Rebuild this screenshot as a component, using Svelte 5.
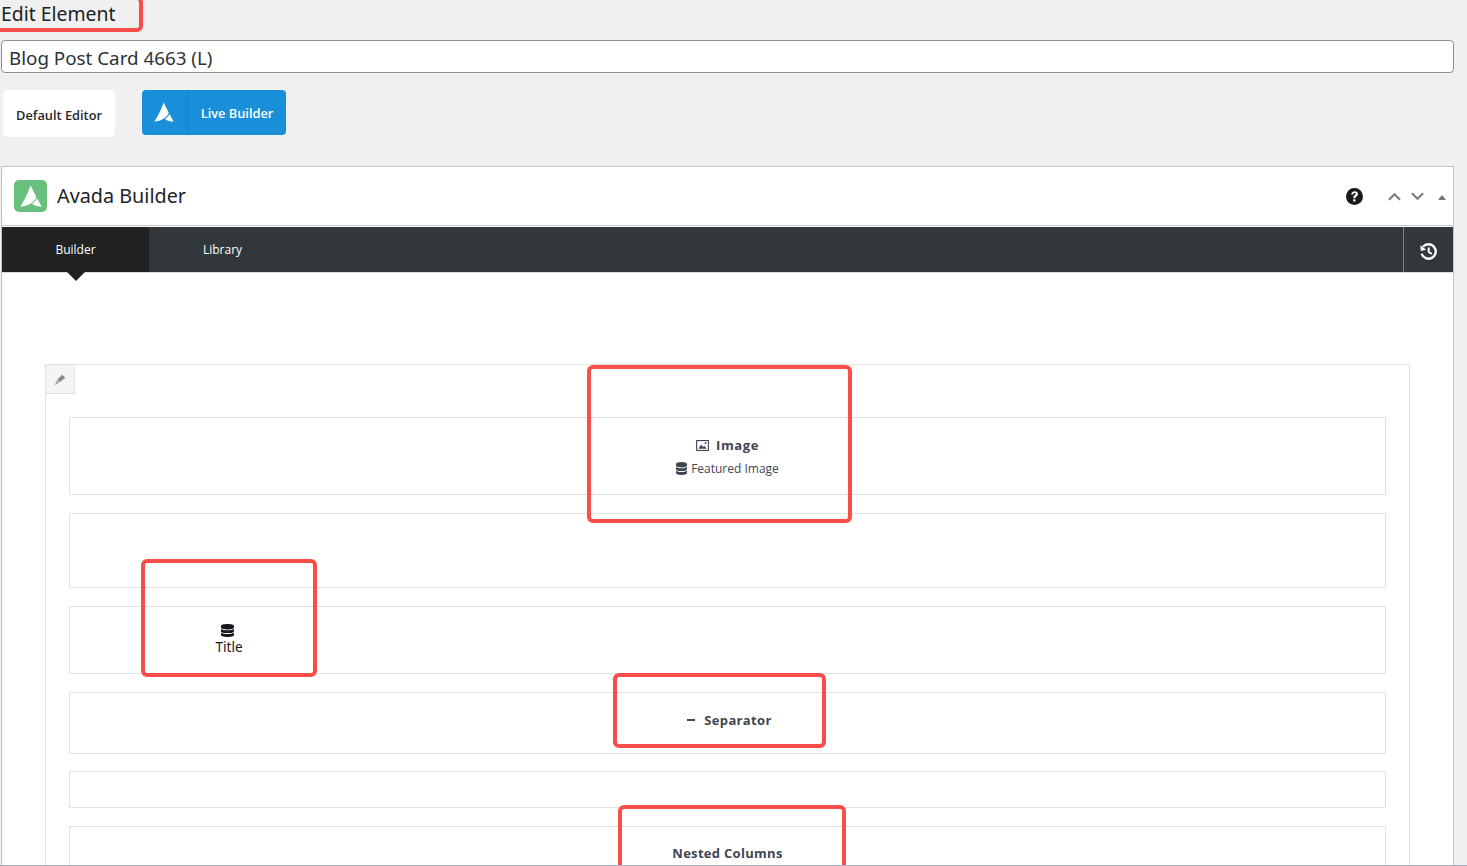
<script>
  const db = "M6 0C2.700 0 0 .8 0 2.100v1.600C0 5 2.700 5.800 6 5.800s6-.8 6-2.100V2.100C12 .8 9.300 0 6 0zM0 5.300v2.400C0 9 2.700 9.800 6 9.800s6-.8 6-2.100V5.300C10.700 6.300 8.400 6.800 6 6.800S1.300 6.300 0 5.300zm0 4v2.600C0 13.200 2.700 14 6 14s6-.8 6-2.100V9.300c-1.300 1-3.600 1.500-6 1.500S1.300 10.300 0 9.300z";
</script>

{#snippet avada(cls)}
  <svg class={cls} viewBox="0 0 24 24" aria-hidden="true">
    <path fill="#fff" d="M11.500 .5 L17.800 13 C15.500 19 9 23 .5 23.500 C4.500 17 8.500 9.500 11.500 .5z"/>
    <path fill="#fff" d="M18.600 14.500 L23.500 23.500 C19.500 23.500 15.800 22.500 13.200 20.400 C15.500 19 17.500 17 18.600 14.500z"/>
  </svg>
{/snippet}

<div class="page">
  <h1 class="title">Edit Element</h1>
  <input class="name" value="Blog Post Card 4663 (L)" aria-label="Name" />

  <div class="switch">
    <button class="default">Default Editor</button>
    <button class="live">
      <span class="live-icon">{@render avada("live-logo")}</span>
      <span class="live-text">Live Builder</span>
    </button>
  </div>

  <section class="postbox">
    <header class="box-head">
      <span class="box-logo">{@render avada("box-logo-svg")}</span>
      <h2>Avada Builder</h2>
      <div class="box-actions">
        <svg class="help" viewBox="0 0 16 16" aria-hidden="true">
          <circle cx="8" cy="8" r="8" fill="#191919"/>
          <path d="M4.900 6C5 4.200 6.300 3 8.200 3c1.800 0 3.100 1.100 3.100 2.700 0 1.100-.6 1.700-1.500 2.300-.7.400-.9.700-.9 1.300v.3H6.900V9c0-1.100.4-1.700 1.200-2.200.7-.4 1-.7 1-1.100 0-.5-.4-.9-1-.9-.7 0-1.100.4-1.200 1.200z" fill="#fff"/>
          <rect x="6.800" y="10.600" width="2.100" height="2.100" rx=".3" fill="#fff"/>
        </svg>
        <svg class="chev up" viewBox="0 0 14 9" aria-hidden="true"><path d="M1 8 7 2l6 6" /></svg>
        <svg class="chev down" viewBox="0 0 14 9" aria-hidden="true"><path d="M1 1l6 6 6-6" /></svg>
        <svg class="tri" viewBox="0 0 8 5" aria-hidden="true"><path d="M4 0l4 5H0z" fill="#72777c"/></svg>
      </div>
    </header>

    <nav class="tabs">
      <div class="tab active">Builder</div>
      <div class="tab">Library</div>
      <div class="history">
        <svg viewBox="0 0 16 16" aria-hidden="true">
          <path d="M2.800 3.600A6.800 6.800 0 1 1 1.500 10" fill="none" stroke="#fff" stroke-width="2.200"/>
          <path d="M.3 2.200 .8 7.500l5-1.200z" fill="#fff"/>
          <path d="M8.200 4.300v4.200l2.900 1.800" fill="none" stroke="#fff" stroke-width="1.900"/>
        </svg>
      </div>
    </nav>

    <div class="canvas">
      <div class="container">
        <div class="pencil">
          <svg viewBox="0 0 12 12" aria-hidden="true">
            <path d="M8 .7 11.300 3.700 5.700 8.300 3.200 5.800z" fill="#8b8b8b"/>
            <path d="M2.800 6.300 5.100 8.800 .7 11.300z" fill="#a9a29a"/>
          </svg>
        </div>

        <div class="row r1">
          <div class="el-head">
            <svg class="img-ico" viewBox="0 0 14 12" aria-hidden="true">
              <rect x=".6" y=".6" width="12.800" height="10.800" fill="#fff" stroke="#3f4652" stroke-width="1.200"/>
              <path d="M2.500 9.500 5.500 5l2 2.500L9 6.300l2.500 3.200z" fill="#3f4652"/>
              <circle cx="10.300" cy="3.300" r="1" fill="#3f4652"/>
            </svg>
            <span>Image</span>
          </div>
          <div class="el-sub">
            <svg class="db" viewBox="0 0 12 14" preserveAspectRatio="none" aria-hidden="true"><path d={db} fill="#3f4652"/></svg>
            <span>Featured Image</span>
          </div>
        </div>

        <div class="row r2"></div>

        <div class="row r3">
          <div class="title-el">
            <svg class="db dark" viewBox="0 0 12 14" preserveAspectRatio="none" aria-hidden="true"><path d={db} fill="#15181c"/></svg>
            <span>Title</span>
          </div>
        </div>

        <div class="row r4">
          <div class="el-head sep"><i class="dash"></i><span>Separator</span></div>
        </div>

        <div class="row r5"></div>

        <div class="row r6">
          <div class="el-head nested"><span>Nested Columns</span></div>
        </div>
      </div>
    </div>
  </section>

  <i class="mark m-edit"></i>
  <i class="mark m-image"></i>
  <i class="mark m-title"></i>
  <i class="mark m-sep"></i>
  <i class="mark m-nested"></i>
  <i class="edge"></i>
</div>

<style>
  :global(body) { margin: 0; background: #f0f0f1; }
  .page {
    position: relative;
    height: 866px;
    overflow: hidden;
    padding: 0 13px 0 1px;
    box-sizing: border-box;
    background: #f0f0f1;
    font-family: "Open Sans", "Noto Sans", sans-serif;
    color: #1d2327;
  }
  .title {
    margin: 0;
    height: 40px;
    font: 400 19.400px/27px "Noto Sans", "Open Sans", sans-serif;
    color: #1d2327;
  }
  .name {
    display: block;
    width: 100%;
    height: 33px;
    box-sizing: border-box;
    border: 1px solid #8c8f94;
    border-radius: 4px;
    padding: 2px 7px 0;
    background: #fff;
    font: 400 18.800px/29px "Noto Sans", "Open Sans", sans-serif;
    color: #2c3338;
    outline: none;
  }
  .switch {
    display: flex;
    gap: 27px;
    margin: 17px 0 29px 2px;
    height: 47px;
    align-items: flex-start;
  }
  button {
    border: 0;
    padding: 0;
    font-family: "Open Sans", "Noto Sans", sans-serif;
    font-weight: 600;
    cursor: pointer;
  }
  .default {
    width: 112px;
    height: 47px;
    padding-top: 2px;
    background: #fff;
    border-radius: 5px;
    font-size: 12.800px;
    color: #23282d;
  }
  .live {
    display: flex;
    width: 144px;
    height: 45px;
    background: #198fd9;
    border-radius: 4px;
    color: #fff;
    font-size: 12.800px;
  }
  .live-icon {
    display: flex;
    align-items: center;
    justify-content: center;
    width: 45px;
    height: 100%;
    box-sizing: content-box;
    border-right: 1px solid #1a7fbf;
  }
  .live-text {
    flex: 1;
    line-height: 47px;
    text-align: center;
  }
  .live :global(.live-logo) { width: 20px; height: 20px; margin-top: -1px; margin-left: -1px; }

  .postbox {
    border: 1px solid #c3c4c7;
    background: #fff;
    box-sizing: border-box;
    height: 760px;
  }
  .box-head {
    display: flex;
    align-items: center;
    height: 58px;
    padding: 0 7px 0 12px;
    border-bottom: 1px solid #c3c4c7;
    box-sizing: content-box;
  }
  .box-logo {
    display: flex;
    align-items: center;
    justify-content: center;
    width: 33px;
    height: 32px;
    border-radius: 5px;
    background: #69c07d;
  }
  .box-logo :global(.box-logo-svg) { width: 22px; height: 22px; }
  h2 {
    margin: 0 0 0 10px;
    font: 400 19.800px/26px "Noto Sans", "Open Sans", sans-serif;
    color: #1d2327;
  }
  .box-actions {
    margin-left: auto;
    display: flex;
    align-items: center;
  }
  .help { width: 17px; height: 17px; margin-right: 25px; }
  .chev { width: 13px; height: 9px; fill: none; stroke: #787c82; stroke-width: 2.200; }
  .down { margin-left: 10px; }
  .tri { width: 8px; height: 5px; margin-left: 14px; margin-top: 2px; }

  .tabs {
    display: flex;
    height: 45px;
    background: #32373c;
    border-bottom: 1px solid #dcdcde;
    box-sizing: content-box;
    font-size: 12px;
    color: #fff;
    margin-top: 1px;
  }
  .tab {
    position: relative;
    width: 147px;
    line-height: 45px;
    text-align: center;
  }
  .tab.active { background: #222; }
  .tab.active::after {
    content: "";
    position: absolute;
    left: 65px;
    top: 45px;
    border: 9px solid transparent;
    border-top-color: #222;
    border-bottom: 0;
  }
  .history {
    margin-left: auto;
    width: 50px;
    padding: 3px 0 0 0;
    box-sizing: border-box;
    border-left: 1px solid #7d8084;
    display: flex;
    align-items: center;
    justify-content: center;
  }
  .history svg { width: 17px; height: 17px; }

  .canvas { padding: 91px 43px 0; }
  .container {
    position: relative;
    border: 1px solid #e2e2e2;
    padding: 52px 23px 0;
    min-height: 600px;
  }
  .pencil {
    position: absolute;
    left: 0;
    top: 0;
    width: 29px;
    height: 29px;
    padding-top: 2px;
    box-sizing: border-box;
    background: #f5f5f5;
    border-right: 1px solid #e2e2e2;
    border-bottom: 1px solid #e2e2e2;
    display: flex;
    align-items: center;
    justify-content: center;
  }
  .pencil svg { width: 12px; height: 12px; }
  .row {
    border: 1px solid #e2e2e2;
    box-sizing: border-box;
    text-align: center;
    margin-bottom: 18px;
  }
  .r1 { height: 78px; padding-top: 18px; }
  .r2 { height: 75px; }
  .r3 { height: 68px; padding-top: 17px; }
  .r4 { height: 62px; padding-top: 18px; margin-bottom: 17px; }
  .r5 { height: 37px; }
  .r6 { height: 60px; padding-top: 17px; }
  .el-head {
    display: flex;
    justify-content: center;
    align-items: center;
    gap: 7px;
    height: 18px;
    font-size: 13px;
    font-weight: 700;
    letter-spacing: .6px;
    color: #3f4652;
  }
  .img-ico { width: 13px; height: 11px; }
  .el-sub {
    display: flex;
    justify-content: center;
    align-items: center;
    gap: 4px;
    margin-top: 5px;
    height: 18px;
    font-size: 12px;
    color: #3f4652;
  }
  .db { width: 11px; height: 13px; }
  .title-el {
    width: 318px;
    display: flex;
    flex-direction: column;
    align-items: center;
    font: 400 13.600px/16px "Noto Sans", "Open Sans", sans-serif;
    color: #15181c;
  }
  .db.dark { width: 13px; height: 13px; margin: 0 4px 2px 0; }
  .sep { gap: 9px; letter-spacing: .35px; padding-left: 4px; }
  .nested { letter-spacing: .3px; }
  .dash { width: 8px; height: 2px; background: #3f4652; }

  .mark {
    position: absolute;
    box-sizing: border-box;
    border: 4px solid #f94d4a;
    border-radius: 6px;
    pointer-events: none;
  }
  .m-edit { left: -8px; top: -4px; width: 151px; height: 36px; }
  .m-image { left: 587px; top: 365px; width: 265px; height: 158px; }
  .m-title { left: 141px; top: 559px; width: 176px; height: 118px; }
  .m-sep { left: 613px; top: 673px; width: 213px; height: 75px; }
  .m-nested { left: 618px; top: 805px; width: 228px; height: 90px; }
  .edge {
    position: absolute;
    left: 0;
    right: 0;
    bottom: 0;
    height: 1px;
    background: #a9b1bd;
  }
</style>
